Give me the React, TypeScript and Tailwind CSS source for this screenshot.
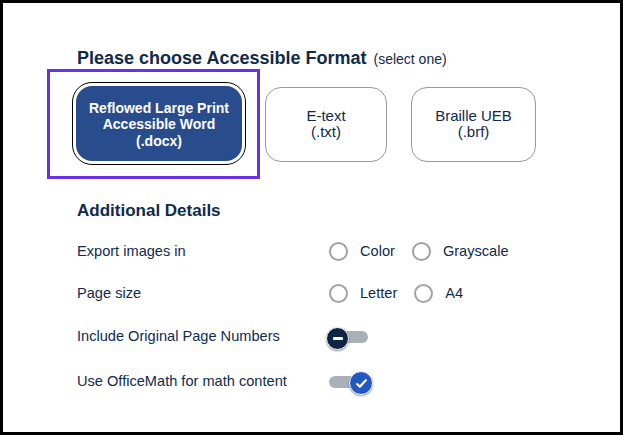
import { useState } from 'react'

const navy = 'text-[#102a4c]'

const Radio = ({ label, gap }: { label: string; gap: string }) => (
  <label className={`flex items-center ${gap}`}>
    <span className="h-[19px] w-[19px] rounded-full border-2 border-[#a3a3a3] bg-white" />
    <span className={`ml-[12px] text-[14.6px] ${navy}`}>{label}</span>
  </label>
)

const App = () => {
  const [format] = useState('docx')
  return (
    <div
      className="box-border h-[435px] w-[623px] border-[3px] border-black bg-white pl-[74px]"
      style={{ fontFamily: '"Liberation Sans", Arial, sans-serif' }}
    >
      <div className={`mt-[44px] flex h-[22px] items-baseline ${navy}`}>
        <span className="text-[18px] font-bold leading-[22px]">
          Please choose Accessible Format
        </span>
        <span className="ml-[7px] text-[14px]">(select one)</span>
      </div>

      <div className="-ml-[30px] flex items-center">
        <div className="border-[3px] border-[#6a32e6] pb-[11px] pl-[22px] pr-[11px] pt-[10px]">
          <div className="rounded-[20px] border-[1.5px] border-black p-[3px]">
            <button
              aria-pressed={format === 'docx'}
              className="flex h-[75px] w-[166px] flex-col items-center justify-center rounded-[16px] bg-[#294d8c] pt-[2px] text-[14px] font-bold leading-[16.5px] text-white"
            >
              <span>Reflowed Large Print</span>
              <span>Accessible Word</span>
              <span>(.docx)</span>
            </button>
          </div>
        </div>
        <button
          className={`ml-[5px] flex h-[75px] w-[122px] flex-col items-center justify-center rounded-[16px] border border-[#999] text-[15px] leading-[16.5px] ${navy}`}
        >
          <span>E-text</span>
          <span>(.txt)</span>
        </button>
        <button
          className={`ml-[24px] flex h-[75px] w-[125px] flex-col items-center justify-center rounded-[16px] border border-[#999] text-[15px] leading-[16.5px] ${navy}`}
        >
          <span>Braille UEB</span>
          <span>(.brf)</span>
        </button>
      </div>

      <h2 className={`mt-[21px] text-[17px] font-bold leading-[22px] ${navy}`}>
        Additional Details
      </h2>

      <div className="mt-[9px] grid grid-cols-[252px_auto] text-[14.6px]">
        <div className={`flex h-[42px] items-center ${navy}`}>Export images in</div>
        <div className="flex h-[42px] items-center">
          <Radio label="Color" gap="" />
          <Radio label="Grayscale" gap="ml-[17px]" />
        </div>

        <div className={`flex h-[42px] items-center ${navy}`}>Page size</div>
        <div className="flex h-[42px] items-center">
          <Radio label="Letter" gap="" />
          <Radio label="A4" gap="ml-[17px]" />
        </div>

        <div className={`mt-[1px] flex h-[42px] items-center ${navy}`}>Include Original Page Numbers</div>
        <div className="mt-[1px] flex h-[42px] items-center">
          <div className="relative -ml-[3px] h-[24px] w-[46px]">
            <span className="absolute left-[9px] top-[6px] h-[12px] w-[33px] rounded-full bg-[#aab0b8]" />
            <span className="absolute left-0 top-[2px] flex h-[23px] w-[23px] items-center justify-center rounded-full border border-white bg-[#0d2447] shadow-[0_1px_2px_rgba(0,0,0,0.4)]">
              <span className="h-[3px] w-[10px] rounded-[1px] bg-white" />
            </span>
          </div>
        </div>

        <div className={`mt-[3px] flex h-[42px] items-center ${navy}`}>
          Use OfficeMath for math content
        </div>
        <div className="mt-[3px] flex h-[42px] items-center">
          <div className="relative -ml-[3px] h-[24px] w-[48px]">
            <span className="absolute left-[3px] top-[6px] h-[12px] w-[33px] rounded-full bg-[#aab0b8]" />
            <span className="absolute left-[23px] top-[1px] flex h-[24px] w-[24px] items-center justify-center rounded-full border border-white bg-[#2357c1] shadow-[0_1px_2px_rgba(0,0,0,0.4)]">
              <svg width="13" height="13" viewBox="0 0 24 24" fill="none" stroke="white" strokeWidth="4" strokeLinecap="round" strokeLinejoin="round">
                <path d="M4 13l5 5L20 6" />
              </svg>
            </span>
          </div>
        </div>
      </div>
    </div>
  )
}

export default App
